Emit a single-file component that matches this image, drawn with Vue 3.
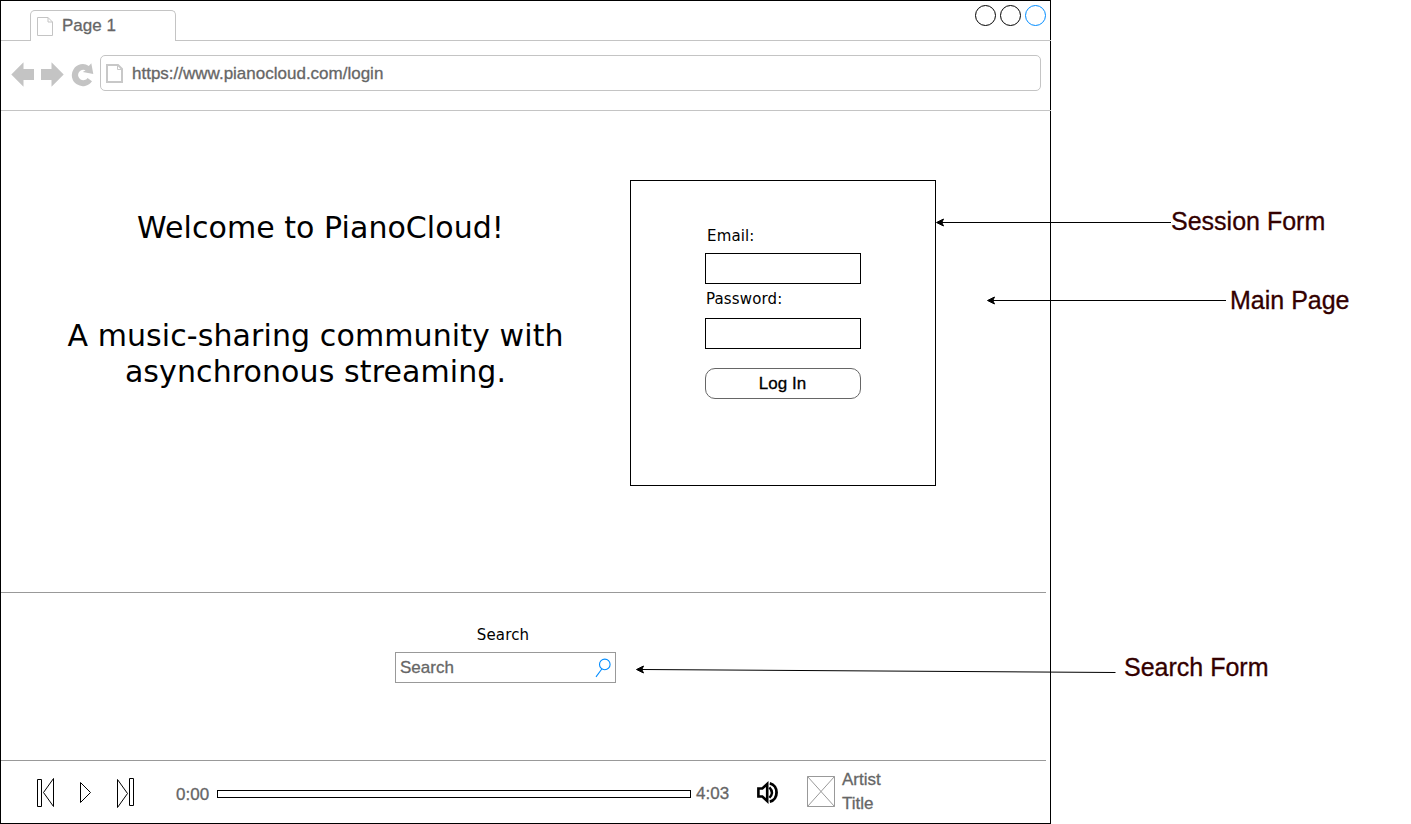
<script setup>
const dots = ['dark', 'dark', 'blue']
const callouts = [
  { name: 'session', text: 'Session Form' },
  { name: 'main', text: 'Main Page' },
  { name: 'search-note', text: 'Search Form' },
]
</script>

<template>
  <div class="board">
    <main class="window">
      <header class="tabs">
        <div class="tab">
          <svg class="tab-file" width="18" height="20" viewBox="0 0 18 20">
            <path d="M1.5 1.5H12L16.5 6V19.5H1.5Z M12 1.5V6H16.5" />
          </svg>
          <span class="sans tab-title">Page 1</span>
        </div>
        <div class="dots"><i v-for="(d, i) in dots" :key="i" :class="d"></i></div>
      </header>

      <nav class="toolbar">
        <svg class="nav-icons" width="84" height="28" viewBox="11 61 84 28">
          <path d="M11.3 74.5L23.5 62.3V69H34V80H23.5V86.7Z" />
          <path d="M63.7 74.5L51.5 62.3V69H41V80H51.5V86.7Z" />
          <path d="M91.3 63.3L93.3 74L82.8 72L85.6 70.3A5.2 5.2 0 1 0 87.6 77.9L92 81.2A11 11 0 1 1 88.8 65.9Z" />
        </svg>
        <div class="address">
          <svg class="url-file" width="19" height="21" viewBox="0 0 19 21">
            <path d="M2 2H13L17 6V19H2Z" />
            <path class="fold" d="M12.5 2V6.5H17" />
          </svg>
          <span class="sans url">https://www.pianocloud.com/login</span>
        </div>
      </nav>

      <section class="hero">
        <div class="intro">
          <h1>Welcome to PianoCloud!</h1>
          <p>A music-sharing community with<br />asynchronous streaming.</p>
        </div>
        <form class="login">
          <label class="email">Email:</label>
          <div class="field"></div>
          <label class="password">Password:</label>
          <div class="field"></div>
          <button type="button"><span class="sans">Log In</span></button>
        </form>
      </section>

      <section class="search">
        <label>Search</label>
        <div class="search-box">
          <span class="sans">Search</span>
          <svg width="18" height="20" viewBox="0 0 18 20">
            <circle cx="10.8" cy="6.4" r="5.3" />
            <path d="M7.8 11L2 18.8" />
          </svg>
        </div>
      </section>

      <footer class="player">
        <svg class="controls" width="100" height="32" viewBox="36 777 100 32">
          <path d="M37.5 779.5H41.5V806.5H37.5Z M53.5 778.5V806.5L43.5 792.5Z" />
          <path d="M80.5 782.5V802.5L90.5 792.5Z" />
          <path d="M117.5 779.5V807.5L127.5 793.5Z M129.5 778.5H133.5V805.5H129.5Z" />
        </svg>
        <span class="sans time start">0:00</span>
        <div class="track"></div>
        <span class="sans time end">4:03</span>
        <svg class="volume" width="23" height="23" viewBox="756 781 23 23">
          <path class="speaker" d="M758.4 788.5H762.3L767.2 784V801L762.3 796.5H758.4Z" />
          <path class="wave-in" d="M769.4 787.3Q774.4 792.5 769.4 797.8" />
          <path class="wave-out" d="M769.8 783.4C778.8 785.4 778.8 799.6 769.8 801.6" />
        </svg>
        <svg class="cover" width="28" height="31" viewBox="0 0 28 31">
          <path d="M.5 .5H27.5V30.5H.5Z M.5 .5L27.5 30.5 M27.5 .5L.5 30.5" />
        </svg>
        <div class="sans song"><span>Artist</span><span>Title</span></div>
      </footer>
    </main>

    <svg class="arrows" width="1411" height="824" viewBox="0 0 1411 824">
      <path d="M942 222.5H1171 M993 300.5H1226 M642 669.5L1115.5 672.5" />
      <path class="head" d="M936.5 222.5L943.5 219L941.8 222.5L943.5 226Z" />
      <path class="head" d="M987.5 300.5L994.5 297L992.8 300.5L994.5 304Z" />
      <path class="head" d="M636.5 669.5L643.5 666L641.8 669.5L643.5 673Z" />
    </svg>
    <span v-for="c in callouts" :key="c.name" class="sans callout" :class="c.name">{{ c.text }}</span>
  </div>
</template>

<style>
body { background: #fff; }
</style>

<style scoped>
.board { position: relative; width: 1411px; height: 824px; overflow: hidden; font-family: Verdana, "DejaVu Sans", sans-serif; color: #000; }
.board * { box-sizing: border-box; }
.sans { font-family: "Liberation Sans", Helvetica, Arial, sans-serif; white-space: nowrap; -webkit-text-stroke: 0.3px currentColor; }
svg { display: block; flex: none; fill: none; }
.window { width: 1051px; height: 824px; border: 1px solid #000; display: flex; flex-direction: column; }

.tabs { height: 40px; flex: none; display: flex; justify-content: space-between; border-bottom: 1px solid #c4c4c4; margin-right: -1px; }
.tab { width: 146px; height: 31px; margin: 9px 0 0 29px; border: 1px solid #c4c4c4; border-bottom: 0; border-radius: 5px 5px 0 0; background: #fff; display: flex; align-items: flex-start; }
.tab-file { margin: 5px 0 0 5px; stroke: #c4c4c4; }
.tab-title { font-size: 17px; line-height: 20px; color: #666; margin: 5px 0 0 8px; }
.dots { display: flex; gap: 4px; margin: 4px 5px 0 0; }
.dots i { width: 21px; height: 21px; border: 1px solid #000; border-radius: 50%; }
.dots .blue { border-color: #008cff; }

.toolbar { height: 70px; flex: none; display: flex; border-bottom: 1px solid #c4c4c4; margin-right: -1px; }
.nav-icons { margin: 20px 0 0 10px; fill: #c4c4c4; }
.address { width: 941px; height: 36px; margin: 14px 0 0 5px; border: 1px solid #c4c4c4; border-radius: 5px; display: flex; }
.url-file { margin: 7px 0 0 4px; stroke: #c8c8c8; stroke-width: 2; }
.url-file .fold { stroke-width: 1; }
.url { font-size: 17px; line-height: 20px; color: #666; margin: 8px 0 0 8px; }

.hero { height: 481px; flex: none; display: flex; align-items: flex-start; }
.intro { width: 629px; padding-top: 99px; text-align: center; }
h1, p { margin: 0; font-weight: 400; font-size: 30px; line-height: 36px; white-space: nowrap; letter-spacing: 0.1px; }
h1 { padding-left: 10px; letter-spacing: 0.05px; }
p { margin-top: 72px; }
.login { width: 306px; height: 306px; margin-top: 69px; border: 1px solid #000; padding: 45px 74px 0; display: flex; flex-direction: column; }
label { font-size: 15px; line-height: 20px; letter-spacing: 0.15px; }
.email { padding-left: 2px; margin-bottom: 7px; }
.password { padding-left: 1px; margin: 5px 0 9px; }
.field { height: 31px; flex: none; border: 1px solid #000; }
button { height: 31px; margin-top: 19px; padding: 0 1px 0 0; border: 1px solid #666; border-radius: 10px; background: #fff; font-size: 17px; color: #000; line-height: 20px; }

.search { height: 168px; flex: none; width: 1045px; border-top: 1px solid #999; padding: 32px 0 0 394px; }
.search label { display: block; width: 216px; text-align: center; }
.search-box { width: 221px; height: 31px; margin-top: 7px; border: 1px solid #999; display: flex; justify-content: space-between; padding: 5px 3px 0 4px; color: #666; font-size: 17px; line-height: 20px; }
.search-box svg { stroke: #008cff; stroke-width: 1.1; }

.player { height: 63px; width: 1045px; border-top: 1px solid #999; display: flex; align-items: flex-start; color: #666; font-size: 17px; line-height: 20px; }
.controls { margin: 16px 0 0 35px; stroke: #000; }
.time { margin-top: 24px; }
.start { width: 41px; margin-left: 40px; }
.track { width: 474px; height: 8px; margin-top: 29px; border: 1px solid #000; }
.end { width: 60px; padding-left: 5px; margin-top: 23px; }
.volume { margin: 20px 0 0 5px; stroke: #000; }
.speaker { stroke-width: 2.6; }
.wave-in { stroke-width: 2.4; }
.wave-out { stroke-width: 2.8; }
.cover { margin: 15px 0 0 28px; stroke: #999; }
.song { display: flex; flex-direction: column; gap: 4px; margin: 9px 0 0 7px; }

.arrows { position: absolute; left: 0; top: 0; stroke: #000; pointer-events: none; }
.head { fill: #000; }
.callout { position: absolute; font-size: 25px; line-height: 30px; color: #300; }
.session { left: 1171px; top: 206px; }
.main { left: 1230px; top: 285px; }
.search-note { left: 1124px; top: 652px; }
</style>
